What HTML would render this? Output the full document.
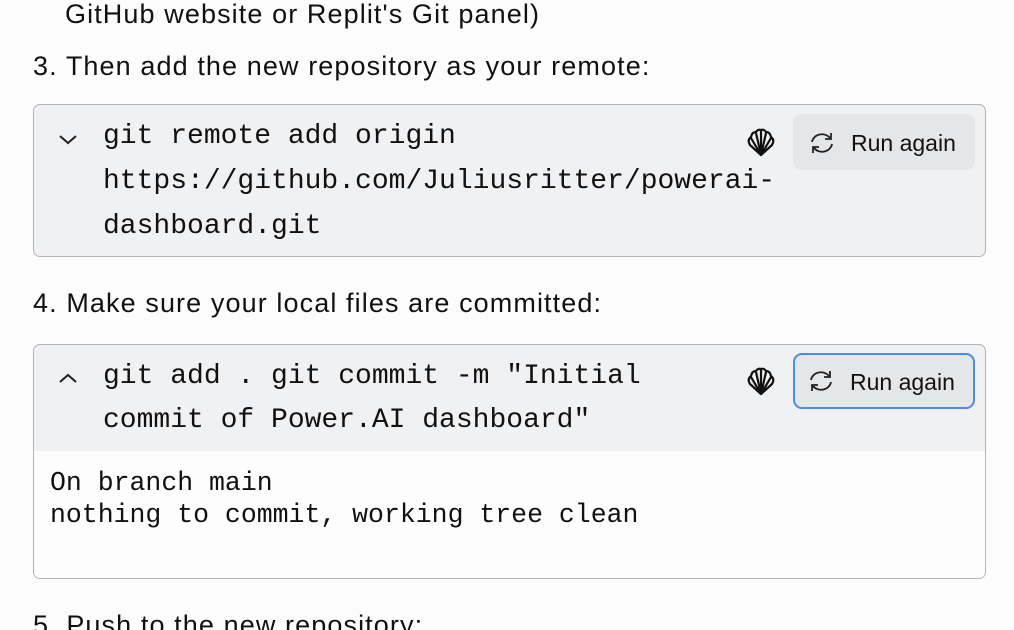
<!DOCTYPE html>
<html><head><meta charset="utf-8"><style>
html,body{margin:0;padding:0;background:#fcfcfc;width:1014px;height:630px;overflow:hidden;position:relative}
.t{position:absolute;font-family:"Liberation Sans",sans-serif;font-size:27px;letter-spacing:1.1px;color:#111;white-space:nowrap;line-height:30px}
.m{position:absolute;font-family:"Liberation Mono",monospace;font-size:28px;color:#111;white-space:nowrap;line-height:30px}
.o{position:absolute;font-family:"Liberation Mono",monospace;font-size:26.5px;color:#111;white-space:nowrap;line-height:30px}
.blk{position:absolute;left:33px;width:951px;border:1.5px solid #b4b4b6;border-radius:7px;background:#f0f1f3;overflow:hidden}
.btn{position:absolute;left:793px;width:182px;height:56px;border-radius:9px;background:#e5e6e8;box-sizing:border-box}
.btn span{position:absolute;left:58px;top:14px;font-family:"Liberation Sans",sans-serif;font-size:23px;color:#111;line-height:30px}
.btn svg{position:absolute;left:16px;top:18px}
.shell{position:absolute;left:746px}
</style></head><body>
<div class="t" style="left:65px;top:-1px">GitHub website or Replit's Git panel)</div>
<div class="t" style="left:33px;top:51px">3. Then add the new repository as your remote:</div>

<div class="blk" style="top:104px;height:151px"></div>
<svg style="position:absolute;left:58px;top:134px" width="20" height="12" viewBox="0 0 20 12"><path d="M2 2 L10 9 L18 2" fill="none" stroke="#222" stroke-width="2"/></svg>
<div class="m" style="left:103px;top:122px">git remote add origin</div>
<div class="m" style="left:103px;top:167px">https://github.com/Juliusritter/powerai-</div>
<div class="m" style="left:103px;top:212px">dashboard.git</div>
<svg class="shell" style="top:128px" width="30" height="30" viewBox="0 0 30 30"><g fill="none" stroke="#111" stroke-width="2.2" stroke-linejoin="round"><path d="M15 27 L4 17 Q1 12 5 9 Q6 4 10 4 Q12 1 15 2 Q18 1 20 4 Q24 4 25 9 Q29 12 26 17 Z"/><path d="M15 27 L5 10"/><path d="M15 27 L10 5"/><path d="M15 27 V3"/><path d="M15 27 L20 5"/><path d="M15 27 L25 10"/></g></svg>
<div class="btn" style="top:114px"><svg width="26" height="22" viewBox="0 0 26 22"><g fill="none" stroke="#222" stroke-width="1.8"><path d="M3 10 A10 9 0 0 1 21 6"/><path d="M22 1 V7 H16"/><path d="M23 12 A10 9 0 0 1 5 16"/><path d="M4 21 V15 H10"/></g></svg><span>Run again</span></div>

<div class="t" style="left:33px;top:288px">4. Make sure your local files are committed:</div>

<div class="blk" style="top:344px;height:233px"><div style="position:absolute;left:0;top:106px;width:100%;height:130px;background:#fdfdfd"></div></div>
<svg style="position:absolute;left:58px;top:372px" width="20" height="12" viewBox="0 0 20 12"><path d="M2 10 L10 3 L18 10" fill="none" stroke="#222" stroke-width="2"/></svg>
<div class="m" style="left:103px;top:362px">git add . git commit -m "Initial</div>
<div class="m" style="left:103px;top:406px">commit of Power.AI dashboard"</div>
<svg class="shell" style="top:367px" width="30" height="30" viewBox="0 0 30 30"><g fill="none" stroke="#111" stroke-width="2.2" stroke-linejoin="round"><path d="M15 27 L4 17 Q1 12 5 9 Q6 4 10 4 Q12 1 15 2 Q18 1 20 4 Q24 4 25 9 Q29 12 26 17 Z"/><path d="M15 27 L5 10"/><path d="M15 27 L10 5"/><path d="M15 27 V3"/><path d="M15 27 L20 5"/><path d="M15 27 L25 10"/></g></svg>
<div class="btn" style="top:353px;border:2.5px solid #4a8cf0"><svg style="left:13px;top:15px" width="26" height="22" viewBox="0 0 26 22"><g fill="none" stroke="#222" stroke-width="1.8"><path d="M3 10 A10 9 0 0 1 21 6"/><path d="M22 1 V7 H16"/><path d="M23 12 A10 9 0 0 1 5 16"/><path d="M4 21 V15 H10"/></g></svg><span style="left:55px;top:12px">Run again</span></div>
<div class="o" style="left:50px;top:468px">On branch main</div>
<div class="o" style="left:50px;top:500px">nothing to commit, working tree clean</div>

<div class="t" style="left:33px;top:610px">5. Push to the new repository:</div>
</body></html>
